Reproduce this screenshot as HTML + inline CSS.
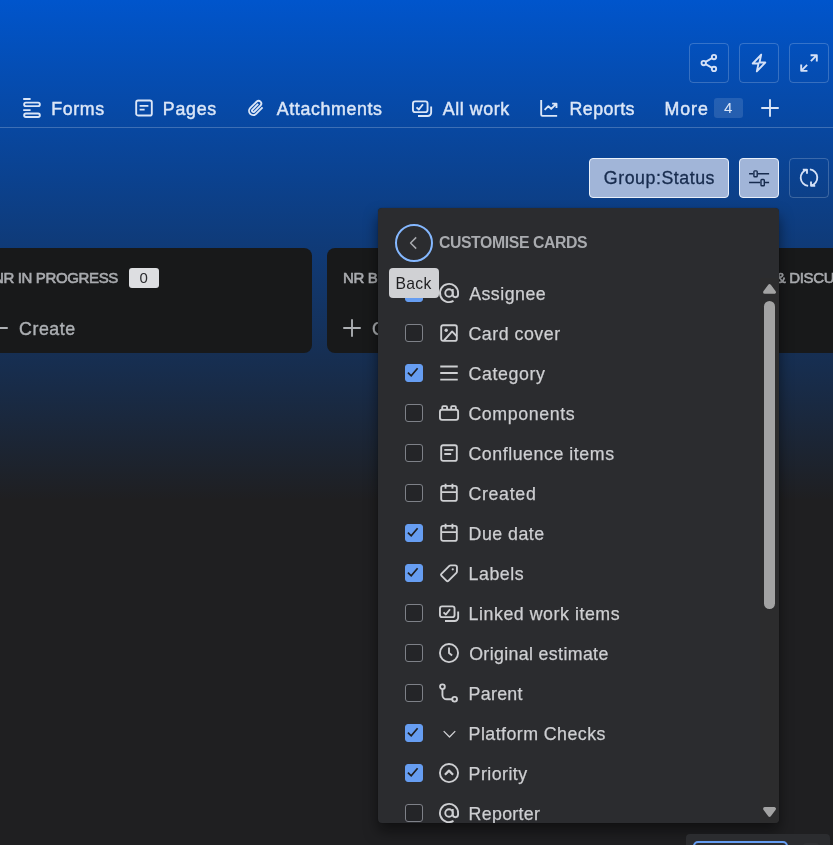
<!DOCTYPE html>
<html lang="en">
<head>
<meta charset="utf-8">
<title>Board - Customise cards</title>
<style>
*{box-sizing:border-box;margin:0;padding:0}
html,body{width:833px;height:845px;overflow:hidden}
body{position:relative;font-family:"Liberation Sans",sans-serif;background:#1f1f21;color:#cecfd2}
#bg{position:absolute;left:0;top:0;width:833px;height:845px;background:linear-gradient(180deg,#0055cc 0px,#1f1f21 500px)}
#root{position:absolute;left:0;top:0;width:833px;height:845px;overflow:hidden;will-change:transform}
.abs{position:absolute}
svg{display:block;overflow:visible}
.ic{fill:none;stroke:currentColor;stroke-width:1.5;stroke-linejoin:round;stroke-linecap:butt}
/* top buttons */
.tbtn{position:absolute;width:40px;height:40px;border:1px solid rgba(255,255,255,.2);border-radius:4px;color:#d5e1f7;display:flex;align-items:center;justify-content:center}
/* tabs */
.tab{position:absolute;top:98px;height:22px;line-height:22px;font-size:17.8px;font-weight:normal;-webkit-text-stroke:.45px currentColor;color:#dbe6f7;white-space:nowrap}
.tabic{position:absolute;color:#dbe6f7}
#tabline{position:absolute;left:0;top:127px;width:833px;height:1px;background:rgba(255,255,255,.22)}
/* columns */
.col{position:absolute;top:248px;height:105px;background:#18191a;border-radius:8px}
.colh{position:absolute;top:268px;height:20px;line-height:20px;font-size:15px;font-weight:normal;-webkit-text-stroke:.6px currentColor;color:#a9abaf;white-space:nowrap}
.create{position:absolute;top:318px;height:22px;line-height:22px;font-size:17.8px;-webkit-text-stroke:.4px currentColor;color:#adb0b4;white-space:nowrap}
/* popup */
#pop{position:absolute;left:378.300px;top:207.600px;width:401.200px;height:615.100px;background:#2b2c2f;border-radius:4px;box-shadow:0 8px 14px rgba(3,4,4,.5),0 0 1px rgba(3,4,4,.5);overflow:hidden}
.row{position:absolute;left:0;width:380px;height:40px}
.cb{position:absolute;left:26.500px;top:11px;width:18px;height:18px;border:1.500px solid #7e8188;border-radius:3px;background:#242528}
.cb.on{background:#669df1;border-color:#669df1}
.cb svg{position:absolute;left:-1.500px;top:-1.500px}
.ri{position:absolute;left:60.500px;top:10px;width:20px;height:20px;color:#cecfd2}
.rl{position:absolute;left:91px;top:10px;height:22px;line-height:22px;font-size:17.8px;-webkit-text-stroke:.25px currentColor;color:#cecfd2;white-space:nowrap}
</style>
</head>
<body>
<div id="root">
<div id="bg"></div>

<!-- SECTION:TOP -->
<div class="tbtn" style="left:689px;top:43px">
 <svg width="20" height="20" viewBox="0 0 16 16" class="ic"><circle cx="12" cy="3.250" r="1.750"/><circle cx="3.750" cy="8" r="1.750"/><circle cx="12" cy="12.750" r="1.750"/><path d="M5.300 7.100 10.450 4.150M5.300 8.900l5.150 2.950"/></svg>
</div>
<div class="tbtn" style="left:739px;top:43px">
 <svg width="20" height="20" viewBox="0 0 16 16" class="ic"><path d="M9.750 1.250 3 8.400H7.600L6.250 14.750 13 7.600H8.400z"/></svg>
</div>
<div class="tbtn" style="left:789px;top:43px">
 <svg width="20" height="20" viewBox="0 0 16 16" class="ic"><path d="M9.250 1.750h5v5M14.250 1.750 9.500 6.500M6.750 14.250h-5v-5M1.750 14.250 6.500 9.500"/></svg>
</div>

<!-- SECTION:TABS -->
<svg class="tabic ic abs" style="left:21px;top:97.700px;stroke-width:1.875" width="20" height="20" viewBox="0 0 20 20"><path d="M2.200 1.050H9.600M2.200 12.100H9.600"/><rect x="3.140" y="4.640" width="15.720" height="3.520" rx="1.760"/><rect x="3.140" y="15.440" width="15.720" height="3.520" rx="1.760"/></svg>
<div id="t1" class="tab" style="left:51.31px;letter-spacing:0.600px">Forms</div>
<svg class="tabic ic abs" style="left:134px;top:98.200px" width="20" height="20" viewBox="0 0 16 16"><rect x="1.750" y="2" width="12.500" height="12" rx="1.500"/><path d="M4.500 6.250h7M4.500 9.250h4"/></svg>
<div id="t2" class="tab" style="left:162.76px;letter-spacing:0.767px">Pages</div>
<svg class="tabic ic abs" style="left:246px;top:98px" width="20" height="20" viewBox="0 0 16 16"><path d="M13.25 7.5 8.1 12.65a3.3 3.3 0 0 1-4.7-4.7L8.6 2.8a2.2 2.2 0 0 1 3.1 3.1L6.6 11a1.1 1.1 0 0 1-1.55-1.55L9.75 4.75"/></svg>
<div id="t3" class="tab" style="left:276.71px;letter-spacing:0.647px">Attachments</div>
<svg class="tabic ic abs" style="left:412px;top:98px;stroke-width:1.875" width="20" height="20" viewBox="0 0 20 20"><rect x="0.950" y="3.350" width="14.600" height="10.800" rx="2.200"/><path d="M4.500 9.400 6.900 11.500 11 6.200M19.150 8.600V14.500a3.500 3.500 0 0 1-3.500 3.500H6"/></svg>
<div id="t4" class="tab" style="left:442.75px;letter-spacing:0.590px">All work</div>
<svg class="tabic ic abs" style="left:539px;top:98px" width="20" height="20" viewBox="0 0 16 16"><path d="M1.75 1.500V13.25a1 1 0 0 0 1 1H14.5M4.5 9.5l3-3 2.250 2.250 4-4M10.5 4.5h3.500V8"/></svg>
<div id="t5" class="tab" style="left:569.59px;letter-spacing:0.436px">Reports</div>
<div id="t6" class="tab" style="left:664.41px;letter-spacing:0.998px">More</div>
<div id="t7" class="abs" style="left:713.500px;top:98.200px;width:29.300px;height:19.600px;border-radius:3px;background:rgba(255,255,255,.12);color:#dbe6f7;font-size:15px;line-height:20px;text-align:center;letter-spacing:0.000px;text-indent:0.18px">4</div>
<svg class="tabic ic abs" style="left:760px;top:98px" width="20" height="20" viewBox="0 0 16 16"><path d="M8 1v14M1 8h14"/></svg>
<div id="tabline"></div>

<!-- SECTION:TOOLBAR -->
<div id="t8" class="abs" style="left:589px;top:158px;width:140px;height:40px;border:1.25px solid #e9f0fa;border-radius:4px;background:#a1b5d8;color:#172b4d;font-size:17.8px;line-height:39.5px;-webkit-text-stroke:.3px currentColor;text-align:center;white-space:nowrap;letter-spacing:0.534px;text-indent:0.90px">Group:Status</div>
<div class="abs" style="left:739px;top:158px;width:40px;height:40px;border:1.25px solid #e9f0fa;border-radius:4px;background:#a1b5d8;color:#172b4d;display:flex;align-items:center;justify-content:center">
 <svg width="20" height="20" viewBox="0 0 20 20" class="ic" style="stroke-width:1.600"><path d="M0.100 5.700H4.200M8.900 5.700H20.100M0.100 14.500H11.300M16 14.500H20.100"/><rect x="4.900" y="2.900" width="3.300" height="5.900" rx=".8" stroke-width="1.400"/><rect x="12" y="11.500" width="3.300" height="6.200" rx=".8" stroke-width="1.400"/></svg>
</div>
<div class="tbtn" style="left:789px;top:158px">
 <svg width="20" height="20" viewBox="0 0 20 20" class="ic" style="stroke-width:1.875"><path d="M3.800 1.600H7.990V5.800M7.990 1.600A8.300 8.300 0 0 0 9.130 17.900M12.010 13.500V17.700H16.200M12.010 17.700A8.300 8.300 0 0 0 10.870 1.400"/></svg>
</div>

<!-- SECTION:COLUMNS -->
<div class="col" style="left:-26px;width:338px"></div>
<div class="col" style="left:327px;width:338px"></div>
<div class="col" style="left:680px;width:338px"></div>
<div id="t9" class="colh" style="left:-7.1px;letter-spacing:-0.35px">NR IN PROGRESS</div>
<div id="t10" class="abs" style="left:129px;top:268px;width:30px;height:20px;border-radius:3px;background:#dddee1;color:#292a2e;font-size:15px;line-height:20px;text-align:center;letter-spacing:0.000px;text-indent:-0.92px">0</div>
<div id="t11" class="colh" style="left:343px;letter-spacing:-0.35px">NR BLOCKED</div>
<div id="t12" class="colh" style="left:690.1px;letter-spacing:-0.35px">NR REVIEW &amp; DISCUSSION</div>
<svg class="ic abs" style="left:-11px;top:317.5px;color:#adb0b4" width="20" height="20" viewBox="0 0 16 16"><path d="M8 1v14M1 8h14"/></svg>
<div id="t13" class="create" style="left:19.01px;letter-spacing:0.573px">Create</div>
<svg class="ic abs" style="left:341.500px;top:317.5px;color:#adb0b4" width="20" height="20" viewBox="0 0 16 16"><path d="M8 1v14M1 8h14"/></svg>
<div id="t14" class="create" style="left:372px;letter-spacing:0.47px">Create</div>

<!-- SECTION:POPUP -->
<div id="pop">
<div class="abs" style="left:16.500px;top:16px;width:38px;height:38px;border:2.5px solid #85b8ff;border-radius:50%"></div>
<svg class="ic abs" style="left:26.200px;top:25px;color:#a9abaf;stroke-width:1.2" width="20" height="20" viewBox="0 0 16 16"><path d="M9.750 3.500 5.250 8l4.500 4.500"/></svg>
<div id="t15" class="abs" style="left:60.63px;top:25px;height:20px;line-height:20px;font-size:15.8px;font-weight:bold;color:#a9abaf;white-space:nowrap;letter-spacing:-0.391px">CUSTOMISE CARDS</div>
<div class="abs" id="scroll" style="left:0;top:70.200px;width:401.200px;height:544.900px;overflow:hidden">
<div class="row" style="top:-4.8px"><div class="cb on"><svg width="18" height="18" viewBox="0 0 18 18" fill="none" stroke="#1f1f21" stroke-width="1.700"><path d="M3.900 9.600 7.200 12.800 13.600 5.300"/></svg></div><svg class="ri ic" viewBox="0 0 16 16"><circle cx="8" cy="8" r="3"/><path d="M11 4.750v4.500a2.125 2.125 0 0 0 4.250 0V8A7.250 7.250 0 1 0 11.600 14.300"/></svg><div id="t16" class="rl" style="left:90.83px;letter-spacing:0.494px">Assignee</div></div>
<div class="row" style="top:35.2px"><div class="cb"></div><svg class="ri ic" viewBox="0 0 16 16"><rect x="1.750" y="1.750" width="12.500" height="12.500" rx="1.500"/><circle cx="5.750" cy="5.750" r="1.350" fill="currentColor" stroke="none"/><path d="M4 14 10.500 6.750l3.750 4"/></svg><div id="t17" class="rl" style="left:90.12px;letter-spacing:0.523px">Card cover</div></div>
<div class="row" style="top:75.2px"><div class="cb on"><svg width="18" height="18" viewBox="0 0 18 18" fill="none" stroke="#1f1f21" stroke-width="1.700"><path d="M3.900 9.600 7.200 12.800 13.600 5.300"/></svg></div><svg class="ri ic" viewBox="0 0 16 16"><path d="M1 2.750h14M1 8h14M1 13.250h14"/></svg><div id="t18" class="rl" style="left:90.12px;letter-spacing:0.636px">Category</div></div>
<div class="row" style="top:115.2px"><div class="cb"></div><svg class="ri ic" viewBox="0 0 16 16"><g transform="scale(.8)" stroke-width="1.875"><rect x=".950" y="6.750" width="18.150" height="10.100" rx="2"/><path d="M3.250 6.750V4.150a1 1 0 0 1 1-1h2.800a1 1 0 0 1 1 1V6.750M12.150 6.750V4.150a1 1 0 0 1 1-1h2.700a1 1 0 0 1 1 1V6.750"/></g></svg><div id="t19" class="rl" style="left:90.12px;letter-spacing:0.597px">Components</div></div>
<div class="row" style="top:155.2px"><div class="cb"></div><svg class="ri ic" viewBox="0 0 16 16"><rect x="1.750" y="1.750" width="12.500" height="12.500" rx="1.500"/><path d="M4.250 5.500h7.250M4.250 8.750h5.500"/></svg><div id="t20" class="rl" style="left:90.12px;letter-spacing:0.550px">Confluence items</div></div>
<div class="row" style="top:195.2px"><div class="cb"></div><svg class="ri ic" viewBox="0 0 16 16"><rect x="1.750" y="2.250" width="12.500" height="12" rx="1.500"/><path d="M1.750 7.250h12.500M5.250 .500v4M10.750 .500v4"/></svg><div id="t21" class="rl" style="left:90.12px;letter-spacing:0.689px">Created</div></div>
<div class="row" style="top:235.2px"><div class="cb on"><svg width="18" height="18" viewBox="0 0 18 18" fill="none" stroke="#1f1f21" stroke-width="1.700"><path d="M3.900 9.600 7.200 12.800 13.600 5.300"/></svg></div><svg class="ri ic" viewBox="0 0 16 16"><rect x="1.750" y="2.250" width="12.500" height="12" rx="1.500"/><path d="M1.750 7.250h12.500M5.250 .500v4M10.750 .500v4"/></svg><div id="t22" class="rl" style="left:90.30px;letter-spacing:0.467px">Due date</div></div>
<div class="row" style="top:275.2px"><div class="cb on"><svg width="18" height="18" viewBox="0 0 18 18" fill="none" stroke="#1f1f21" stroke-width="1.700"><path d="M3.900 9.600 7.200 12.800 13.600 5.300"/></svg></div><svg class="ri ic" viewBox="0 0 16 16"><path d="M1.900 8.700 8.300 2.300a1.500 1.500 0 0 1 1.060-.44h3.500a1.500 1.500 0 0 1 1.500 1.500v3.500a1.500 1.500 0 0 1-.44 1.060L7.500 14.300a1 1 0 0 1-1.400 0L1.900 10.100a1 1 0 0 1 0-1.400z"/><circle cx="11" cy="5" r=".9" fill="currentColor" stroke="none"/></svg><div id="t23" class="rl" style="left:90.30px;letter-spacing:0.514px">Labels</div></div>
<div class="row" style="top:315.2px"><div class="cb"></div><svg class="ri ic" viewBox="0 0 16 16"><g transform="scale(.8)" stroke-width="1.875"><rect x="0.950" y="3.350" width="14.600" height="10.800" rx="2.200"/><path d="M4.500 9.400 6.900 11.500 11 6.200M19.150 8.600V14.500a3.500 3.500 0 0 1-3.500 3.500H6"/></g></svg><div id="t24" class="rl" style="left:90.30px;letter-spacing:0.541px">Linked work items</div></div>
<div class="row" style="top:355.2px"><div class="cb"></div><svg class="ri ic" viewBox="0 0 16 16"><circle cx="8" cy="8" r="7.250"/><path d="M8 3.500V8l2.500 2"/></svg><div id="t25" class="rl" style="left:90.89px;letter-spacing:0.358px">Original estimate</div></div>
<div class="row" style="top:395.2px"><div class="cb"></div><svg class="ri ic" viewBox="0 0 16 16"><circle cx="2.750" cy="3" r="1.900"/><circle cx="12.500" cy="13" r="1.900"/><path d="M2.750 4.900V9.500a3.500 3.500 0 0 0 3.500 3.500H10.600"/></svg><div id="t26" class="rl" style="left:90.30px;letter-spacing:0.287px">Parent</div></div>
<div class="row" style="top:435.2px"><div class="cb on"><svg width="18" height="18" viewBox="0 0 18 18" fill="none" stroke="#1f1f21" stroke-width="1.700"><path d="M3.900 9.600 7.200 12.800 13.600 5.300"/></svg></div><svg class="ri ic" viewBox="0 0 16 16"><path d="M3.750 6.500 8.400 11.250 13 6.500" stroke-width="1.050"/></svg><div id="t27" class="rl" style="left:90.30px;letter-spacing:0.453px">Platform Checks</div></div>
<div class="row" style="top:475.2px"><div class="cb on"><svg width="18" height="18" viewBox="0 0 18 18" fill="none" stroke="#1f1f21" stroke-width="1.700"><path d="M3.900 9.600 7.200 12.800 13.600 5.300"/></svg></div><svg class="ri ic" viewBox="0 0 16 16"><circle cx="8" cy="8" r="7.250"/><path d="M4.750 9.400 8 6.100l3.250 3.300" stroke-width="1.800"/></svg><div id="t28" class="rl" style="left:90.30px;letter-spacing:0.463px">Priority</div></div>
<div class="row" style="top:515.2px"><div class="cb"></div><svg class="ri ic" viewBox="0 0 16 16"><circle cx="8" cy="8" r="3"/><path d="M11 4.750v4.500a2.125 2.125 0 0 0 4.250 0V8A7.250 7.250 0 1 0 11.600 14.300"/></svg><div id="t29" class="rl" style="left:90.30px;letter-spacing:0.309px">Reporter</div></div>
<div class="abs" style="left:382.200px;top:0;width:19px;height:545px;background:#2c2c2d"></div>
<svg class="abs" style="left:384.600px;top:6.100px" width="13.100" height="9.900" viewBox="0 0 13.100 9.900"><path d="M6.550 1.700 11.400 8.200H1.700z" fill="#a3a3a3" stroke="#a3a3a3" stroke-width="3.200" stroke-linejoin="round"/></svg>
<div class="abs" style="left:385.700px;top:23px;width:11.200px;height:308.200px;border-radius:5.600px;background:#a3a3a3"></div>
<svg class="abs" style="left:384.600px;top:529.200px" width="13.100" height="9.900" viewBox="0 0 13.100 9.900"><path d="M6.550 8.200 11.400 1.700H1.700z" fill="#a3a3a3" stroke="#a3a3a3" stroke-width="3.200" stroke-linejoin="round"/></svg>
</div>
</div>
<div id="t30" class="abs" style="left:389px;top:268px;width:50px;height:30px;border-radius:4px;background:#d0d1d4;color:#1f1f21;font-size:15.700px;line-height:31.500px;text-align:center;letter-spacing:0.380px;text-indent:-0.83px">Back</div>

<!-- SECTION:BOTTOM -->
<div class="abs" style="left:686px;top:834px;width:144px;height:20px;border-radius:4px;background:#2b2c2f"></div>
<div class="abs" style="left:693px;top:841px;width:95px;height:20px;border:2px solid #669df1;border-radius:5px"></div>
<div class="abs" style="left:803px;top:843px;width:16px;height:10px;border-radius:3px;background:#303134"></div>

</div>
</body>
</html>
